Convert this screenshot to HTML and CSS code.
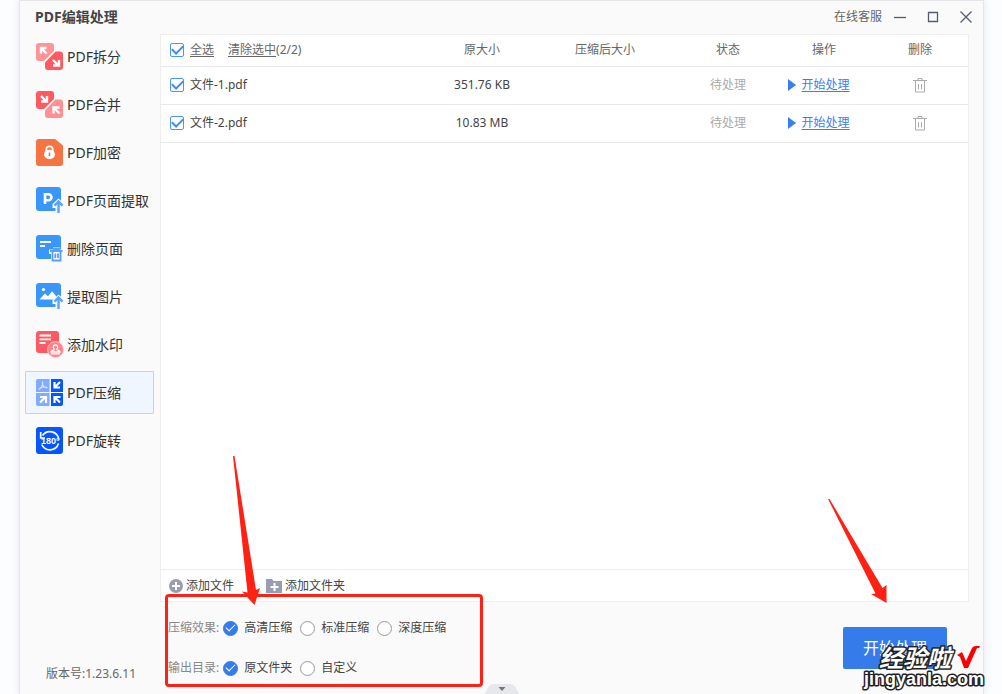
FILE: index.html
```html
<!DOCTYPE html>
<html lang="zh-CN">
<head>
<meta charset="utf-8">
<meta name="viewport" content="width=device-width, initial-scale=1">
<title>PDF编辑处理</title>
<link rel="stylesheet" href="styles.css">
</head>
<body>
<div class="window">
  <header class="titlebar">
    <h1 class="title">PDF编辑处理</h1>
    <div class="window-actions">
      <a class="support" href="#">在线客服</a>
      <button class="win-btn" type="button" aria-label="最小化"><svg width="14" height="14" viewBox="0 0 14 14"><path d="M1 7.500h12"/></svg></button>
      <button class="win-btn" type="button" aria-label="最大化"><svg width="14" height="14" viewBox="0 0 14 14"><path d="M2.500 2.500h9v9h-9z"/></svg></button>
      <button class="win-btn" type="button" aria-label="关闭"><svg width="14" height="14" viewBox="0 0 14 14"><path d="M1.500 1.500l11 11M12.500 1.500l-11 11"/></svg></button>
    </div>
  </header>
  <div class="body">
    <aside class="sidebar">
      <nav class="nav">
        <a class="nav-item" href="#">
          <svg class="nav-icon" viewBox="0 0 27 27"><path fill="#ff9496" d="M3 0h12a3 3 0 0 1 3 3v5L8 18H3a3 3 0 0 1-3-3V3a3 3 0 0 1 3-3z"/><path fill="#ff5a61" d="M19.500 8.500H24a3 3 0 0 1 3 3V24a3 3 0 0 1-3 3H12a3 3 0 0 1-3-3v-4.500z"/><path fill="none" stroke="#fff" stroke-width="2.400" d="M10.500 10.500l-5-5M5 10.500V5h5.500M17 17l5.500 5.500M17 22.500h6V17"/></svg>
          <span>PDF拆分</span></a>
        <a class="nav-item" href="#">
          <svg class="nav-icon" viewBox="0 0 27 27"><path fill="#ff5a61" d="M3 0h12a3 3 0 0 1 3 3v5L8 18H3a3 3 0 0 1-3-3V3a3 3 0 0 1 3-3z"/><path fill="#ff8f92" d="M19.500 8.500H24a3 3 0 0 1 3 3V24a3 3 0 0 1-3 3H12a3 3 0 0 1-3-3v-4.500z"/><path fill="none" stroke="#fff" stroke-width="2.400" d="M5 5l5.500 5.500M5 10.500h6V5M23.500 22.500L18 17M17.500 22.500v-6h6"/></svg>
          <span>PDF合并</span></a>
        <a class="nav-item" href="#">
          <svg class="nav-icon" viewBox="0 0 27 27"><path fill="#f67343" d="M3 0h16l8 6.500V24a3 3 0 0 1-3 3H3a3 3 0 0 1-3-3V3a3 3 0 0 1 3-3z"/><path fill="none" stroke="#fff" stroke-width="1.800" d="M10.300 13v-2.500a3.200 3.200 0 0 1 6.400 0V13"/><ellipse cx="13.500" cy="15.500" rx="5.500" ry="4.700" fill="#fff"/><path stroke="#f67343" stroke-width="1.600" d="M13.500 13.500v3.500"/></svg>
          <span>PDF加密</span></a>
        <a class="nav-item" href="#">
          <svg class="nav-icon" viewBox="0 0 27 27"><rect width="25" height="24" rx="3" fill="#3996fb"/><path fill="none" stroke="#fff" stroke-width="2.600" d="M9 17V7.300h3.500a2.900 2.900 0 0 1 0 5.900H9"/><path fill="#fafafa" d="M19.500 26v-5h-3v-4l6-5.500 5 4.500v10z"/><path fill="none" stroke="#5ba4fb" stroke-width="2.400" d="M22.500 26V15M18.500 18.700l4-4.200 4 4.200"/></svg>
          <span>PDF页面提取</span></a>
        <a class="nav-item" href="#">
          <svg class="nav-icon" viewBox="0 0 27 27"><rect width="25" height="24" rx="3" fill="#3996fb"/><path stroke="#fff" stroke-width="1.800" d="M4 7h11M4 11h5"/><path fill="#fafafa" d="M13 14.500h4v-2h7v2h3V27H15v-8h-2z"/><path fill="none" stroke="#559ff8" stroke-width="1.800" d="M14 16h12.500M18 16v-2h5v2M16.500 17v8.500h8V17M19.300 18.500v4.500M22 18.500v4.500"/></svg>
          <span>删除页面</span></a>
        <a class="nav-item" href="#">
          <svg class="nav-icon" viewBox="0 0 27 27"><rect width="25" height="24" rx="3" fill="#3996fb"/><circle cx="7.500" cy="6.500" r="1.600" fill="#fff"/><path fill="#fff" d="M3.500 16.500l5.500-6 3 2.800 4-5L20 13v3.500z"/><path fill="#fafafa" d="M19.500 26v-5h-3v-4l6-5.500 5 4.500v10z"/><path fill="none" stroke="#5ba4fb" stroke-width="2.400" d="M22.500 26V15M18.500 18.700l4-4.200 4 4.200"/></svg>
          <span>提取图片</span></a>
        <a class="nav-item" href="#">
          <svg class="nav-icon" viewBox="0 0 27 27"><rect width="23" height="22" rx="3" fill="#ff5a61"/><path stroke="#fff" stroke-width="1.800" d="M3.500 4.500h11.500M3.500 8.300h11.500M3.500 12h6"/><circle cx="19.500" cy="18.500" r="8" fill="#ff8388" stroke="#ffdada" stroke-width=".8"/><path fill="none" stroke="#fff" stroke-width="1.300" d="M18.300 18.300c-2.400-3 .2-4.500 1.200-4.500s3.600 1.500 1.200 4.500c0 1.400 3.300.9 3.300 2.700h-9c0-1.800 3.300-1.300 3.300-2.700zM15 22.800h9"/></svg>
          <span>添加水印</span></a>
        <a class="nav-item nav-item-active" href="#" aria-current="page">
          <svg class="nav-icon" viewBox="0 0 27 27"><path fill="#80abff" d="M2 0h11.500v13H0V2a2 2 0 0 1 2-2zM0 14h13.500v13H2a2 2 0 0 1-2-2z"/><path fill="#0556ff" d="M15 0h10a2 2 0 0 1 2 2v11H15zM15 14h12v11a2 2 0 0 1-2 2H15z"/><path fill="none" stroke="#dce8ff" stroke-width="1.100" d="M6.500 2.500c1 4-1 6.500-4 8.300M6.800 5.500c.5 2.500 2.500 3.200 4.700 3.300M4 9c2-1.300 5-1.200 7.500-.5"/><path fill="none" stroke="#fff" stroke-width="2.200" d="M24 3l-5 5M18.500 3v5.500H24M4 23.500l5.500-5.500M4 18h6v6M24 23.500L18.500 18M18.500 24v-6h6"/></svg>
          <span>PDF压缩</span></a>
        <a class="nav-item" href="#">
          <svg class="nav-icon" viewBox="0 0 27 27"><rect width="27" height="27" rx="3" fill="#0556ff"/><path fill="none" stroke="#fff" stroke-width="1.700" d="M4.700 5v6H9M6.500 8.500a9 9 0 0 1 16.300 4M22.500 16.500a9 9 0 0 1-16.800 1"/><text class="rotate-label" x="5" y="17">180°</text></svg>
          <span>PDF旋转</span></a>
      </nav>
      <p class="version">版本号:1.23.6.11</p>
    </aside>
    <main class="main">
      <section class="panel">
        <table class="files">
          <colgroup><col><col class="col-side"><col class="col-wide"><col class="col-side"><col class="col-side"><col class="col-side"></colgroup>
          <thead>
            <tr>
              <th scope="col"><div class="name-cell"><input class="check" type="checkbox" id="all" checked><label class="underlined" for="all">全选</label><span class="clear"><a class="underlined" href="#">清除选中</a>(2/2)</span></div></th>
              <th scope="col">原大小</th><th scope="col">压缩后大小</th><th scope="col">状态</th><th scope="col">操作</th><th scope="col">删除</th>
            </tr>
          </thead>
          <tbody>
            <tr>
              <td><div class="name-cell"><input class="check" type="checkbox" id="f1" checked><label for="f1">文件-1.pdf</label></div></td>
              <td>351.76 KB</td><td></td><td class="pending">待处理</td>
              <td class="op"><a class="start-link" href="#"><svg width="8" height="12" viewBox="0 0 8 12"><path fill="#3a7df0" d="M0 0l8 6-8 6z"/></svg><span>开始处理</span></a></td>
              <td><button class="trash" type="button" aria-label="删除 文件-1.pdf"><svg width="14" height="15" viewBox="0 0 14 15"><path d="M0 2.500h14M5 2.500v-2h4v2M2.500 3v11h9V3M5.500 6v5.500M8.500 6v5.500"/></svg></button></td>
            </tr>
            <tr>
              <td><div class="name-cell"><input class="check" type="checkbox" id="f2" checked><label for="f2">文件-2.pdf</label></div></td>
              <td>10.83 MB</td><td></td><td class="pending">待处理</td>
              <td class="op"><a class="start-link" href="#"><svg width="8" height="12" viewBox="0 0 8 12"><path fill="#3a7df0" d="M0 0l8 6-8 6z"/></svg><span>开始处理</span></a></td>
              <td><button class="trash" type="button" aria-label="删除 文件-2.pdf"><svg width="14" height="15" viewBox="0 0 14 15"><path d="M0 2.500h14M5 2.500v-2h4v2M2.500 3v11h9V3M5.500 6v5.500M8.500 6v5.500"/></svg></button></td>
            </tr>
          </tbody>
        </table>
        <div class="toolbar">
          <button class="add" type="button"><svg width="14" height="14" viewBox="0 0 14 14"><circle cx="7" cy="7" r="7" fill="#979eb1"/><path stroke="#fff" stroke-width="2" d="M7 3v8M3 7h8"/></svg><span>添加文件</span></button>
          <button class="add" type="button"><svg width="16" height="14" viewBox="0 0 16 14"><path fill="#979eb1" d="M0 0h6l1.500 2H16v12H0z"/><path stroke="#fff" stroke-width="2" d="M8.500 4v8M4.500 8h8"/></svg><span>添加文件夹</span></button>
        </div>
      </section>
      <form class="options">
        <div class="option-rows">
          <div class="option-row" role="radiogroup" aria-labelledby="effect">
            <span class="option-name" id="effect">压缩效果:</span>
            <label class="choice"><input class="radio" type="radio" name="effect" checked>高清压缩</label>
            <label class="choice"><input class="radio" type="radio" name="effect">标准压缩</label>
            <label class="choice"><input class="radio" type="radio" name="effect">深度压缩</label>
          </div>
          <div class="option-row" role="radiogroup" aria-labelledby="output">
            <span class="option-name" id="output">输出目录:</span>
            <label class="choice"><input class="radio" type="radio" name="output" checked>原文件夹</label>
            <label class="choice"><input class="radio" type="radio" name="output">自定义</label>
          </div>
        </div>
        <button class="start" type="button">开始处理</button>
        <div class="highlight"></div>
        <svg class="arrow arrow-left" width="28" height="150" viewBox="0 0 28 150"><path fill="#ff2113" d="M0 0h1.500L23 134l4-2-5.500 17L9 135.500l5.500 1z"/></svg>
        <svg class="arrow arrow-right" width="60" height="105" viewBox="0 0 60 105"><path fill="#ff2113" d="M0 0l1.500 0L54.500 89l4-3v18L43 95l4.500-.5z"/></svg>
        <svg class="watermark" width="126" height="54" viewBox="0 0 126 54"><text class="mark-cn" x="17" y="27">经验啦</text><text class="mark-url" x="2" y="45">jingyanla.com</text><path fill="#f00" d="M95 15l5-3 4 9 6-13q1-2 4-2h4l-1 2h-2l-9 20h-4l-4-11z"/></svg>
      </form>
    </main>
  </div>
  <button class="drawer" type="button" aria-label="展开"><svg width="35" height="10" viewBox="0 0 35 10"><path fill="#e6e8ec" d="M0 10L4 3q2-3 5-3h17q3 0 5 3l4 7z"/><path fill="#6e7684" d="M14 3h7l-3.500 4z"/></svg></button>
</div>
</body>
</html>
```

FILE: styles.css
```css
* {
  box-sizing: border-box;
}

body {
  margin: 0;
  background: #fcfdff;
  color: #444;
  font: 12px/18px "Noto Sans", "Noto Sans CJK SC", sans-serif;
}

a {
  color: inherit;
  text-decoration: none;
}

button {
  padding: 0;
  border: 0;
  background: none;
  color: inherit;
  font: inherit;
}

svg {
  display: block;
  flex: none;
}

.window {
  position: relative;
  display: flex;
  flex-direction: column;
  min-height: 100vh;
  margin: 0 18px 0 19px;
  border: solid #e6e6e8;
  border-width: 1px 1px 0;
  background: #fafafa;
  box-shadow: 0 0 7px rgba(40, 60, 100, 0.12);
}

.titlebar {
  display: flex;
  align-items: center;
  justify-content: space-between;
  height: 33px;
  padding: 0 10px 2px 15px;
}

.title {
  margin: 0;
  color: #444;
  font-size: 14px;
  font-weight: 700;
}

.window-actions {
  display: flex;
  align-items: center;
  gap: 19px;
}

.support {
  margin-right: -8px;
  color: #666;
}

.win-btn svg {
  fill: none;
  stroke: #555c70;
  stroke-width: 1.3;
}

.body {
  flex: 1;
  display: grid;
  grid-template-columns: 140px 1fr;
}

.sidebar {
  display: flex;
  flex-direction: column;
  justify-content: space-between;
  padding: 1px 6px 0 5px;
}

.nav {
  display: flex;
  flex-direction: column;
  gap: 5px;
}

.nav-item {
  display: flex;
  align-items: center;
  gap: 4px;
  height: 43px;
  padding-left: 10px;
  border: 1px solid transparent;
  border-radius: 1px;
  color: #333;
  font-size: 14px;
  white-space: nowrap;
}

.nav-item-active {
  border-color: #bcd5f7;
  background: #eff6ff;
}

.nav-icon {
  width: 27px;
  height: 27px;
  overflow: visible;
}

.rotate-label {
  fill: #fff;
  font: 700 9px "Liberation Sans", sans-serif;
}

.version {
  margin: 0;
  padding: 0 0 11px 21px;
  color: #666;
}

.main {
  display: flex;
  flex-direction: column;
  padding-right: 14px;
}

.panel {
  flex: 1;
  display: flex;
  flex-direction: column;
  justify-content: space-between;
  border: 1px solid #eee;
  background: #fff;
}

.files {
  width: 100%;
  border-collapse: collapse;
  table-layout: fixed;
}

.col-side {
  width: 96px;
}

.col-wide {
  width: 150px;
}

.files th,
.files td {
  padding: 0;
  border-bottom: 1px solid #e9e9e9;
  text-align: center;
}

.files th {
  height: 31px;
  color: #666;
  font-weight: 400;
}

.files td {
  height: 38px;
}

.name-cell {
  display: flex;
  align-items: center;
  gap: 6px;
  padding-left: 9px;
}

.underlined,
.start-link span {
  text-decoration: underline;
  text-underline-offset: 2px;
}

.clear {
  margin-left: 8px;
}

.check {
  display: grid;
  place-items: center;
  appearance: none;
  width: 14px;
  height: 14px;
  margin: 0;
  border: 1px solid #4b95f8;
  border-radius: 2px;
  background: #fff;
}

.check:checked::after,
.radio:checked::after {
  content: "";
  width: 9px;
  height: 5px;
  margin-bottom: 3px;
  border: solid #3d8af5;
  border-width: 0 0 2px 2px;
  transform: rotate(-45deg);
}

.files .pending {
  color: #aaa;
}

.files .op {
  padding-right: 10px;
}

.start-link {
  display: inline-flex;
  align-items: center;
  gap: 5px;
  color: #3a7df0;
  vertical-align: middle;
}

.trash {
  display: inline-block;
  vertical-align: middle;
}

.trash svg {
  fill: none;
  stroke: #aaa;
}

.toolbar {
  display: flex;
  align-items: center;
  gap: 32px;
  height: 32px;
  padding-left: 8px;
  border-top: 1px solid #eee;
}

.add {
  display: flex;
  align-items: center;
  gap: 3px;
}

.options {
  position: relative;
  display: flex;
  justify-content: space-between;
  align-items: center;
  padding: 16px 22px 16px 8px;
}

.option-rows {
  display: flex;
  flex-direction: column;
  gap: 20px;
}

.option-row {
  display: flex;
  align-items: center;
  gap: 8px;
  height: 20px;
}

.option-name {
  margin-right: -4px;
  color: #888;
}

.choice {
  display: flex;
  align-items: center;
  gap: 6px;
}

.radio {
  display: grid;
  place-items: center;
  appearance: none;
  width: 15px;
  height: 15px;
  margin: 0;
  border: 1px solid #999;
  border-radius: 50%;
  background: #fff;
}

.radio:checked {
  border-color: #357bea;
  background: #357bea;
}

.radio:checked::after {
  width: 8px;
  height: 4px;
  border-color: #fff;
  border-width: 0 0 1px 1px;
}

.start {
  width: 104px;
  height: 42px;
  border-radius: 2px;
  background: #357bea;
  color: #fff;
  font-size: 16px;
}

.highlight {
  position: absolute;
  top: -8px;
  left: 5px;
  width: 318px;
  height: 93px;
  border: 3px solid #ff2113;
  border-radius: 4px;
  pointer-events: none;
}

.arrow {
  position: absolute;
  pointer-events: none;
}

.arrow-left {
  bottom: 88px;
  left: 73px;
}

.arrow-right {
  right: 81px;
  bottom: 90px;
}

.watermark {
  position: absolute;
  right: -19px;
  bottom: 0;
  overflow: visible;
  pointer-events: none;
}

.mark-cn,
.mark-url {
  fill: #fff;
  stroke: #222;
  stroke-width: 3px;
  stroke-linejoin: round;
  paint-order: stroke;
}

.mark-cn {
  font: italic 700 24px "Noto Sans CJK SC", sans-serif;
}

.mark-url {
  font: 700 18px "Liberation Sans", sans-serif;
}

.drawer {
  position: absolute;
  bottom: 0;
  left: 50%;
  transform: translateX(-50%);
}
```
